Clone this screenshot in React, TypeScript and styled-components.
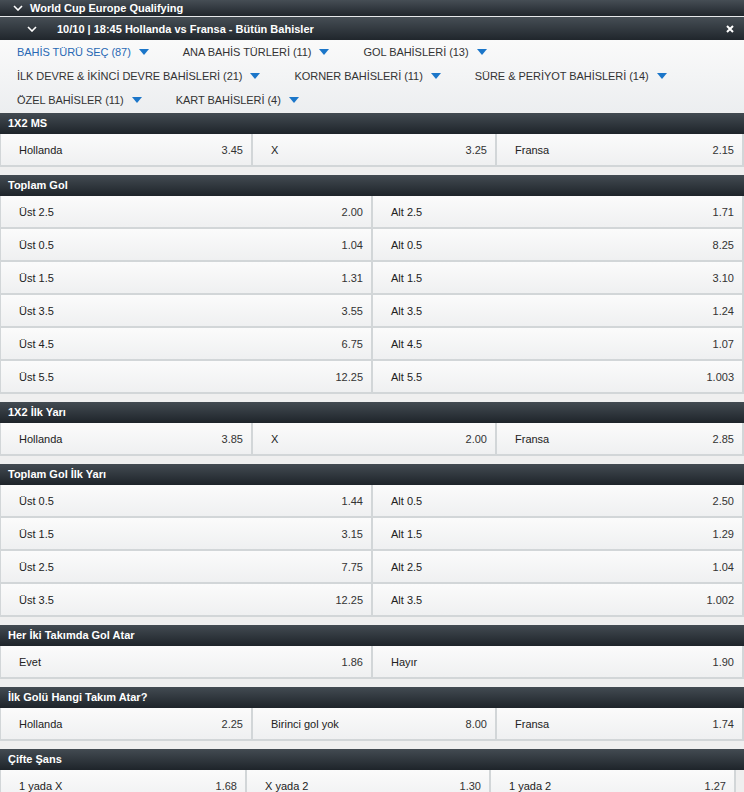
import React from 'react';
import styled, { createGlobalStyle } from 'styled-components';

const GlobalStyle = createGlobalStyle`
  body {
    margin: 0;
    background: #efefef;
    font-family: 'Liberation Sans', Arial, sans-serif;
  }
`

const Page = styled.div`
  width: 744px;
`

const DarkBar = styled.div<{ $h: number; $indent: number }>`
  display: flex;
  align-items: center;
  height: ${p => p.$h}px;
  padding-left: ${p => p.$indent}px;
  padding-right: 10px;
  background: linear-gradient(#464e55, #20262c);
  color: #fff;
  font-size: 11px;
  font-weight: bold;
`

const BarTitle = styled.span<{ $gap: number }>`
  margin-left: ${p => p.$gap}px;
  flex: 1;
`

const Divider = styled.div`
  height: 1px;
  background: #e6e8ea;
`

const FilterPanel = styled.div`
  display: flex;
  flex-wrap: wrap;
  height: 72px;
  padding-left: 17px;
  margin-bottom: 1px;
  background: linear-gradient(#fafafa, #eceef0);
`

const FilterItem = styled.div<{ $active?: boolean }>`
  display: flex;
  align-items: center;
  height: 24px;
  margin-right: 34px;
  font-size: 11px;
  letter-spacing: -0.05px;
  color: ${p => (p.$active ? '#2868b4' : '#333')};
  text-transform: uppercase;
  white-space: nowrap;
`

const Caret = styled.span`
  display: inline-block;
  margin-left: 8px;
  border-left: 5px solid transparent;
  border-right: 5px solid transparent;
  border-top: 6px solid #1b76c9;
`

const Section = styled.div`
  margin-bottom: 8px;
`

const SectionHeader = styled.div`
  height: 21px;
  line-height: 21px;
  padding-left: 8px;
  background: linear-gradient(#434b52, #1e242a);
  color: #fff;
  font-size: 11px;
  font-weight: bold;
`

const OddsGrid = styled.div<{ $cols: string; $width?: number }>`
  display: grid;
  grid-template-columns: ${p => p.$cols};
  gap: 2px;
  width: ${p => (p.$width ? `${p.$width}px` : 'auto')};
  padding: 0 2px 2px 1px;
  box-sizing: border-box;
  background: #d2d6d8;
`

const OddsCell = styled.div`
  display: flex;
  align-items: center;
  justify-content: space-between;
  height: 31px;
  padding: 0 8px 0 18px;
  background: linear-gradient(#fbfbfb, #eff0f1);
  font-size: 11px;
  color: #222;
`

const Price = styled.span`
  color: #333;
`

const Chevron = ({ size }: { size: number }) => (
  <svg width={size} height={size * 0.6} viewBox="0 0 10 6">
    <polyline points="1,1 5,5 9,1" fill="none" stroke="#fff" strokeWidth="1.6" />
  </svg>
)

const CloseIcon = () => (
  <svg width="8" height="8" viewBox="0 0 8 8">
    <path d="M1 1 L7 7 M7 1 L1 7" stroke="#fff" strokeWidth="2" />
  </svg>
)

const filters = [
  { label: 'BAHİS TÜRÜ SEÇ (87)', active: true },
  { label: 'ANA BAHİS TÜRLERİ (11)' },
  { label: 'GOL BAHİSLERİ (13)' },
  { label: 'İLK DEVRE & İKİNCİ DEVRE BAHİSLERİ (21)' },
  { label: 'KORNER BAHİSLERİ (11)' },
  { label: 'SÜRE & PERİYOT BAHİSLERİ (14)' },
  { label: 'ÖZEL BAHİSLER (11)' },
  { label: 'KART BAHİSLERİ (4)' },
]

type Market = {
  title: string
  cols: string
  width?: number
  odds: [string, string][]
}

const THREE = '250px 242px 1fr'
const TWO = '370px 1fr'

const markets: Market[] = [
  { title: '1X2 MS', cols: THREE, odds: [['Hollanda', '3.45'], ['X', '3.25'], ['Fransa', '2.15']] },
  {
    title: 'Toplam Gol',
    cols: TWO,
    odds: [
      ['Üst 2.5', '2.00'], ['Alt 2.5', '1.71'],
      ['Üst 0.5', '1.04'], ['Alt 0.5', '8.25'],
      ['Üst 1.5', '1.31'], ['Alt 1.5', '3.10'],
      ['Üst 3.5', '3.55'], ['Alt 3.5', '1.24'],
      ['Üst 4.5', '6.75'], ['Alt 4.5', '1.07'],
      ['Üst 5.5', '12.25'], ['Alt 5.5', '1.003'],
    ],
  },
  { title: '1X2 İlk Yarı', cols: THREE, odds: [['Hollanda', '3.85'], ['X', '2.00'], ['Fransa', '2.85']] },
  {
    title: 'Toplam Gol İlk Yarı',
    cols: TWO,
    odds: [
      ['Üst 0.5', '1.44'], ['Alt 0.5', '2.50'],
      ['Üst 1.5', '3.15'], ['Alt 1.5', '1.29'],
      ['Üst 2.5', '7.75'], ['Alt 2.5', '1.04'],
      ['Üst 3.5', '12.25'], ['Alt 3.5', '1.002'],
    ],
  },
  { title: 'Her İki Takımda Gol Atar', cols: TWO, odds: [['Evet', '1.86'], ['Hayır', '1.90']] },
  {
    title: 'İlk Golü Hangi Takım Atar?',
    cols: THREE,
    odds: [['Hollanda', '2.25'], ['Birinci gol yok', '8.00'], ['Fransa', '1.74']],
  },
  {
    title: 'Çifte Şans',
    cols: '244px 242px 243px',
    width: 736,
    odds: [['1 yada X', '1.68'], ['X yada 2', '1.30'], ['1 yada 2', '1.27']],
  },
]

const App = () => {
  return (
    <Page>
      <GlobalStyle />
      <DarkBar $h={16} $indent={13}>
        <Chevron size={10} />
        <BarTitle $gap={7}>World Cup Europe Qualifying</BarTitle>
      </DarkBar>
      <Divider />
      <DarkBar $h={23} $indent={27}>
        <Chevron size={10} />
        <BarTitle $gap={20}>10/10 | 18:45 Hollanda vs Fransa - Bütün Bahisler</BarTitle>
        <CloseIcon />
      </DarkBar>
      <FilterPanel>
        {filters.map(f => (
          <FilterItem key={f.label} $active={f.active}>
            {f.label}
            <Caret />
          </FilterItem>
        ))}
      </FilterPanel>
      {markets.map(m => (
        <Section key={m.title}>
          <SectionHeader>{m.title}</SectionHeader>
          <OddsGrid $cols={m.cols} $width={m.width}>
            {m.odds.map(([label, price], i) => (
              <OddsCell key={i}>
                <span>{label}</span>
                <Price>{price}</Price>
              </OddsCell>
            ))}
          </OddsGrid>
        </Section>
      ))}
    </Page>
  )
}

export default App
